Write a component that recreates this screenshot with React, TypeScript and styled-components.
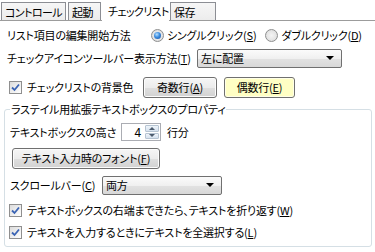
import React from 'react';
import styled, { createGlobalStyle } from 'styled-components';

const Global = createGlobalStyle`
  html, body { margin: 0; padding: 0; background: #ffffff; }
  body {
    font-family: "Noto Sans CJK JP", "Noto Sans", sans-serif;
    font-size: 11px;
    letter-spacing: -0.2px;
    color: #000;
    font-feature-settings: "palt" 1;
  }
  * { box-sizing: border-box; }
`;

const Page = styled.div`
  width: 375px;
  height: 252px;
  overflow: hidden;
  background: #fff;
  display: flex;
  flex-direction: column;
`;

const TabStrip = styled.div`
  display: flex;
  align-items: flex-end;
  height: 21px;
  padding-left: 1px;
  border-bottom: 1px solid #9c9c9c;
`;

const Tab = styled.div<{ $active?: boolean; $w: number; $gap?: number }>`
  width: ${p => p.$w}px;
  margin-right: ${p => p.$gap ?? 2}px;
  height: ${p => (p.$active ? 21 : 18)}px;
  margin-bottom: ${p => (p.$active ? -1 : 0)}px;
  display: flex;
  align-items: center;
  padding-left: ${p => (p.$active ? 5 : 3)}px;
  padding-top: ${p => (p.$active ? 0 : 1)}px;
  font-size: 11px;
  letter-spacing: -0.6px;
  line-height: 1;
  white-space: nowrap;
  background: ${p => (p.$active ? '#ffffff' : 'linear-gradient(#f6f6f6, #ececec)')};
  border: 1px solid ${p => (p.$active ? '#ffffff' : '#8c8e94')};
  border-bottom: none;
`;

const Row = styled.div<{ $mt?: number; $h?: number }>`
  display: flex;
  align-items: center;
  height: ${p => p.$h ?? 22}px;
  margin-top: ${p => p.$mt ?? 0}px;
  padding-left: 7px;
  white-space: nowrap;
`;

const InnerRow = styled.div<{ $mt?: number; $h?: number }>`
  display: flex;
  align-items: center;
  height: ${p => p.$h ?? 22}px;
  margin-top: ${p => p.$mt ?? 0}px;
  white-space: nowrap;
`;

const Label = styled.span<{ $w?: number; $ml?: number }>`
  display: inline-block;
  ${p => (p.$w ? `width: ${p.$w}px;` : '')}
  margin-left: ${p => p.$ml ?? 0}px;
  flex-shrink: 0;
  line-height: 1;
`;

const U = styled.span`
  text-decoration: underline;
  text-underline-offset: 1px;
`;

const RadioItem = styled.label<{ $mr?: number }>`
  display: flex;
  align-items: center;
  gap: 3px;
  margin-right: ${p => p.$mr ?? 0}px;
  line-height: 1;
`;

const RadioCircle = styled.span<{ $on?: boolean }>`
  width: 13px;
  height: 13px;
  border-radius: 50%;
  border: 1px solid #8e8f8f;
  background: radial-gradient(circle at 50% 50%, #f4f4f4 0%, #e4e4e4 60%, #d0d0d0 100%);
  display: flex;
  align-items: center;
  justify-content: center;
  flex-shrink: 0;
  &::after {
    content: '';
    display: ${p => (p.$on ? 'block' : 'none')};
    width: 7px;
    height: 7px;
    border-radius: 50%;
    background: radial-gradient(circle at 40% 35%, #b8e0ff 0%, #3c8de0 45%, #1a4f9e 100%);
  }
`;

const CheckBoxWrap = styled.label<{ $ml?: number; $w?: number }>`
  display: flex;
  align-items: center;
  gap: 5px;
  margin-left: ${p => p.$ml ?? 0}px;
  ${p => (p.$w ? `width: ${p.$w}px;` : '')}
  flex-shrink: 0;
  line-height: 1;
`;

const Box = styled.span`
  width: 13px;
  height: 13px;
  border: 1px solid #8f8f8f;
  background: linear-gradient(135deg, #dcdcdc 0%, #f4f4f4 70%, #ffffff 100%);
  display: flex;
  align-items: center;
  justify-content: center;
  flex-shrink: 0;
`;

const Check: React.FC = () => (
  <Box>
    <svg width="9" height="9" viewBox="0 0 9 9">
      <path d="M1 4.5 L3.5 7 L8 1.5" fill="none" stroke="#3b64b4" strokeWidth="1.8" />
    </svg>
  </Box>
);

const Button = styled.button<{ $w: number; $yellow?: boolean; $ml?: number }>`
  width: ${p => p.$w}px;
  height: 21px;
  margin-left: ${p => p.$ml ?? 0}px;
  padding: 0;
  font-family: inherit;
  font-size: 11px;
  letter-spacing: -0.2px;
  font-feature-settings: "palt" 1;
  color: #000;
  line-height: 1;
  border: 1px solid #707070;
  border-radius: 3px;
  box-shadow: inset 0 0 0 1px ${p => (p.$yellow ? '#ffffe8' : '#fcfcfc')};
  background: ${p => (p.$yellow ? '#ffffc4' : 'linear-gradient(#f6f6f6 0%, #ececec 50%, #dfdfdf 51%, #d2d2d2 100%)')};
  flex-shrink: 0;
`;

const Combo = styled.div<{ $w: number }>`
  width: ${p => p.$w}px;
  height: 19px;
  border: 1px solid #707070;
  border-radius: 2px;
  background: linear-gradient(#fbfbfb 0%, #f0f0f0 50%, #e2e2e2 51%, #d8d8d8 100%);
  display: flex;
  align-items: center;
  justify-content: space-between;
  padding: 0 7px 0 3px;
  line-height: 1;
  flex-shrink: 0;
`;

const Arrow = styled.span`
  width: 0;
  height: 0;
  border-left: 4px solid transparent;
  border-right: 4px solid transparent;
  border-top: 4px solid #000;
`;

const Spin = styled.div`
  width: 40px;
  height: 18px;
  border: 1px solid #abadb3;
  background: #fff;
  display: flex;
  align-items: stretch;
  flex-shrink: 0;
`;

const SpinValue = styled.span`
  flex: 1;
  display: flex;
  align-items: center;
  justify-content: flex-end;
  padding-right: 4px;
  font-size: 12px;
  line-height: 1;
`;

const SpinButtons = styled.div`
  width: 15px;
  display: flex;
  flex-direction: column;
  gap: 1px;
  padding: 1px 1px 1px 0;
`;

const SpinBtn = styled.span<{ $up?: boolean }>`
  flex: 1;
  background: linear-gradient(#eef4fa, #d6e2ee);
  border: 1px solid #b6c4d2;
  border-radius: 1px;
  display: flex;
  align-items: center;
  justify-content: center;
  &::after {
    content: '';
    border-left: 3px solid transparent;
    border-right: 3px solid transparent;
    ${p => (p.$up ? 'border-bottom: 3px solid #4d5c6e;' : 'border-top: 3px solid #4d5c6e;')}
  }
`;

const Group = styled.fieldset`
  margin: 4px 3px 0 4px;
  padding: 5px 5px 4px 5px;
  border: 1px solid #d5dfe5;
  border-radius: 3px;
  min-width: 0;
`;

const Legend = styled.legend`
  padding: 0 1px;
  line-height: 14px;
  white-space: nowrap;
`;

export default function App() {
  return (
    <Page>
      <Global />
      <TabStrip>
        <Tab $w={65}>コントロール</Tab>
        <Tab $w={33} $gap={1}>起動</Tab>
        <Tab $w={67} $active $gap={1}>チェックリスト</Tab>
        <Tab $w={46}>保存</Tab>
      </TabStrip>

      <Row $mt={3}>
        <Label $w={144}>リスト項目の編集開始方法</Label>
        <RadioItem $mr={9}>
          <RadioCircle $on />
          <span>シングルクリック(<U>S</U>)</span>
        </RadioItem>
        <RadioItem>
          <RadioCircle />
          <span>ダブルクリック(<U>D</U>)</span>
        </RadioItem>
      </Row>

      <Row $mt={1}>
        <Label $w={190}>チェックアイコンツールバー表示方法(<U>T</U>)</Label>
        <Combo $w={145}>
          <span>左に配置</span>
          <Arrow />
        </Combo>
      </Row>

      <Row $mt={7}>
        <CheckBoxWrap $ml={2} $w={134}>
          <Check />
          <span>チェックリストの背景色</span>
        </CheckBoxWrap>
        <Button $w={74}>奇数行(<U>A</U>)</Button>
        <Button $w={71} $yellow $ml={7}>偶数行(<U>E</U>)</Button>
      </Row>

      <Group>
        <Legend>ラステイル用拡張テキストボックスのプロパティ</Legend>
        <InnerRow>
          <Label $w={111}>テキストボックスの高さ</Label>
          <Spin>
            <SpinValue>4</SpinValue>
            <SpinButtons>
              <SpinBtn $up />
              <SpinBtn />
            </SpinButtons>
          </Spin>
          <Label $ml={6}>行分</Label>
        </InnerRow>
        <InnerRow $mt={4}>
          <Button $w={148} $ml={2}>テキスト入力時のフォント(<U>F</U>)</Button>
        </InnerRow>
        <InnerRow $mt={5}>
          <Label $w={92}>スクロールバー(<U>C</U>)</Label>
          <Combo $w={120}>
            <span>両方</span>
            <Arrow />
          </Combo>
        </InnerRow>
        <InnerRow $mt={4} $h={20}>
          <CheckBoxWrap $ml={-1}>
            <Check />
            <span>テキストボックスの右端まできたら、テキストを折り返す(<U>W</U>)</span>
          </CheckBoxWrap>
        </InnerRow>
        <InnerRow $mt={2} $h={20}>
          <CheckBoxWrap $ml={-1}>
            <Check />
            <span>テキストを入力するときにテキストを全選択する(<U>L</U>)</span>
          </CheckBoxWrap>
        </InnerRow>
      </Group>
    </Page>
  );
}
